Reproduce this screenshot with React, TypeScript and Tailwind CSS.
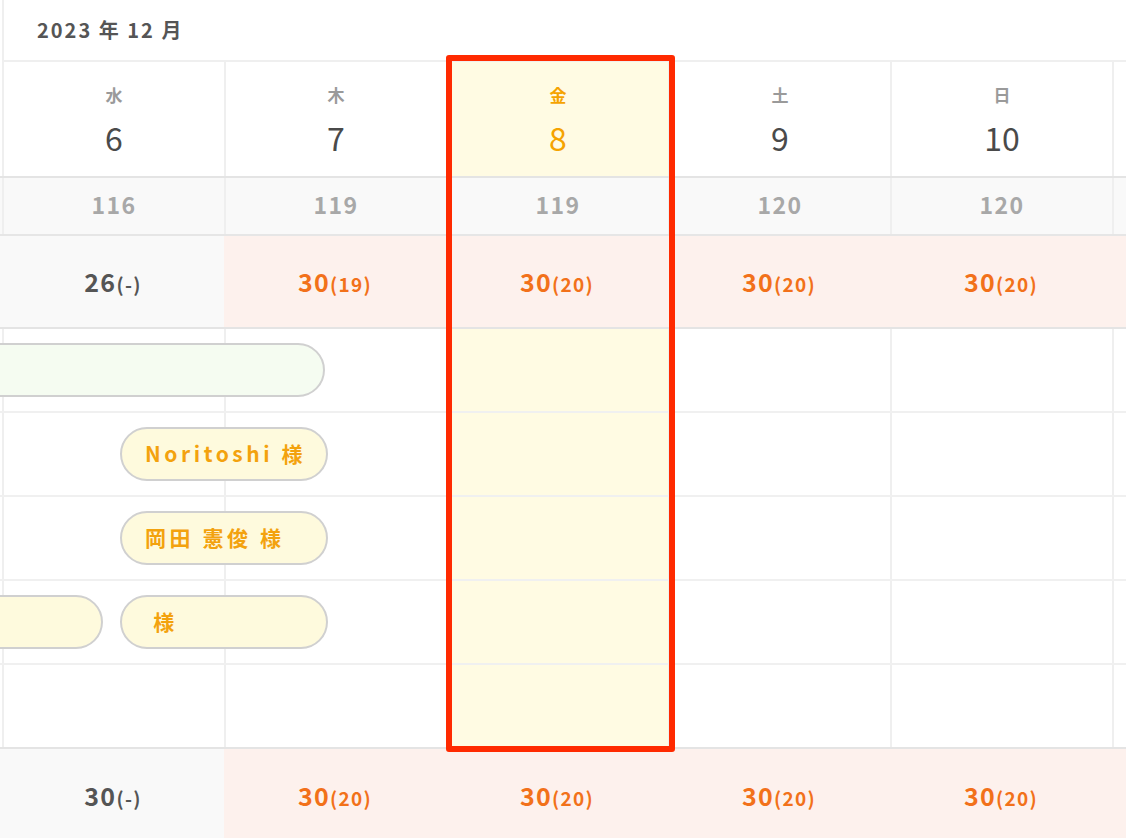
import React from "react";

type Day = {
  wd: string;
  d: number;
  count: number;
  cap: string;
  capSub: string;
  foot: string;
  footSub: string;
  open: boolean;
  today?: boolean;
};

const days: Day[] = [
  { wd: "水", d: 6, count: 116, cap: "26", capSub: "-", foot: "30", footSub: "-", open: false },
  { wd: "木", d: 7, count: 119, cap: "30", capSub: "19", foot: "30", footSub: "20", open: true },
  { wd: "金", d: 8, count: 119, cap: "30", capSub: "20", foot: "30", footSub: "20", open: true, today: true },
  { wd: "土", d: 9, count: 120, cap: "30", capSub: "20", foot: "30", footSub: "20", open: true },
  { wd: "日", d: 10, count: 120, cap: "30", capSub: "20", foot: "30", footSub: "20", open: true },
];

const font = { fontFamily: '"Noto Sans CJK JP", "Noto Sans", sans-serif' };

function Stock({ main, sub, open }: { main: string; sub: string; open: boolean }) {
  return (
    <span className={`font-bold tracking-[0.08em] ${open ? "text-[#f2711a]" : "text-[#555]"}`}>
      <span className="text-[25px]">{main}</span>
      <span className="text-[19px]">({sub})</span>
    </span>
  );
}

function Pill({ left, width, green, children }: { left: number; width: number; green?: boolean; children?: React.ReactNode }) {
  return (
    <div
      className={`absolute top-[14px] h-[54px] rounded-full border-2 border-[#d0d0d0] flex items-center pl-[23px] text-[21px] font-bold tracking-[0.17em] text-[#f3a20e] whitespace-nowrap ${
        green ? "bg-[#f5fcf1]" : "bg-[#fefadd]"
      }`}
      style={{ left, width }}
    >
      {children}
    </div>
  );
}

const bookings: { left: number; width: number; green?: boolean; label?: string }[][] = [
  [{ left: -60, width: 385, green: true }],
  [{ left: 120, width: 208, label: "Noritoshi 様" }],
  [{ left: 120, width: 208, label: "岡田 憲俊 様" }],
  [
    { left: -60, width: 163 },
    { left: 120, width: 208, label: "\u00a0様" },
  ],
  [],
];

// a column cut off at the right edge, only its lines and fill show
function Tail({ className = "" }: { className?: string }) {
  return <div className={`w-[40px] shrink-0 border-l-2 border-[#efefef] ${className}`} />;
}

export default function App() {
  return (
    <div className="relative w-[1126px] h-[838px] overflow-hidden bg-white" style={font}>
      {/* month */}
      <div className="ml-[2px] h-[62px] border-l-2 border-b-2 border-[#efefef] flex items-center pl-[33px]">
        <span className="text-[20px] font-bold tracking-[0.1em] text-[#555]">2023 年 12 月</span>
      </div>

      {/* day header */}
      <div className="flex h-[116px] border-b-2 border-[#e4e4e4]">
        <div className="w-[2px] shrink-0" />
        {days.map((d) => (
          <div
            key={d.d}
            className={`w-[222px] shrink-0 border-l-2 border-[#efefef] flex flex-col items-center pt-[23px] ${
              d.today ? "bg-[#fffbe3]" : ""
            }`}
          >
            <span className={`h-5 leading-5 text-[17px] font-bold ${d.today ? "text-[#f5a300]" : "text-[#9a9a9a]"}`}>{d.wd}</span>
            <span className={`mt-[14px] leading-[36px] text-[32px] ${d.today ? "text-[#f5a300]" : "text-[#4a4a4a]"}`}>{d.d}</span>
          </div>
        ))}
        <Tail />
      </div>

      {/* count */}
      <div className="flex h-[58px] border-b-2 border-[#e6e6e6] bg-[#f9f9f9]">
        <div className="w-[2px] shrink-0" />
        {days.map((d) => (
          <div key={d.d} className="w-[222px] shrink-0 border-l-2 border-[#efefef] flex items-center justify-center pb-1">
            <span className="text-[23px] font-semibold tracking-[0.06em] text-[#a8a8a8]">{d.count}</span>
          </div>
        ))}
        <Tail />
      </div>

      {/* capacity */}
      <div className="flex h-[93px] border-b-2 border-[#e4e4e4]">
        <div className="w-[2px] shrink-0 bg-[#f9f9f9]" />
        {days.map((d) => (
          <div
            key={d.d}
            className={`w-[222px] shrink-0 flex items-center justify-center ${d.open ? "bg-[#fdf1ed]" : "bg-[#f9f9f9]"}`}
          >
            <Stock main={d.cap} sub={d.capSub} open={d.open} />
          </div>
        ))}
        <div className="w-[40px] shrink-0 bg-[#fdf1ed]" />
      </div>

      {/* bookings */}
      {bookings.map((row, i) => (
        <div
          key={i}
          className={`relative flex h-[84px] border-b-2 ${i === bookings.length - 1 ? "border-[#e4e4e4]" : "border-[#f0f0f0]"}`}
        >
          <div className="w-[2px] shrink-0" />
          {days.map((d) => (
            <div key={d.d} className={`w-[222px] shrink-0 border-l-2 border-[#efefef] ${d.today ? "bg-[#fffbe3]" : ""}`} />
          ))}
          <Tail />
          {row.map((b, j) => (
            <Pill key={j} left={b.left} width={b.width} green={b.green}>
              {b.label}
            </Pill>
          ))}
        </div>
      ))}

      {/* footer */}
      <div className="flex h-[94px]">
        <div className="w-[2px] shrink-0 bg-[#f9f9f9]" />
        {days.map((d) => (
          <div
            key={d.d}
            className={`w-[222px] shrink-0 flex items-center justify-center ${d.open ? "bg-[#fdf1ed]" : "bg-[#f9f9f9]"}`}
          >
            <Stock main={d.foot} sub={d.footSub} open={d.open} />
          </div>
        ))}
        <div className="w-[40px] shrink-0 bg-[#fdf1ed]" />
      </div>

      {/* highlight annotation */}
      <div className="absolute left-[446px] top-[55px] w-[229px] h-[697px] border-[6px] border-[#ff2a00] rounded-[3px] pointer-events-none" />
    </div>
  );
}
